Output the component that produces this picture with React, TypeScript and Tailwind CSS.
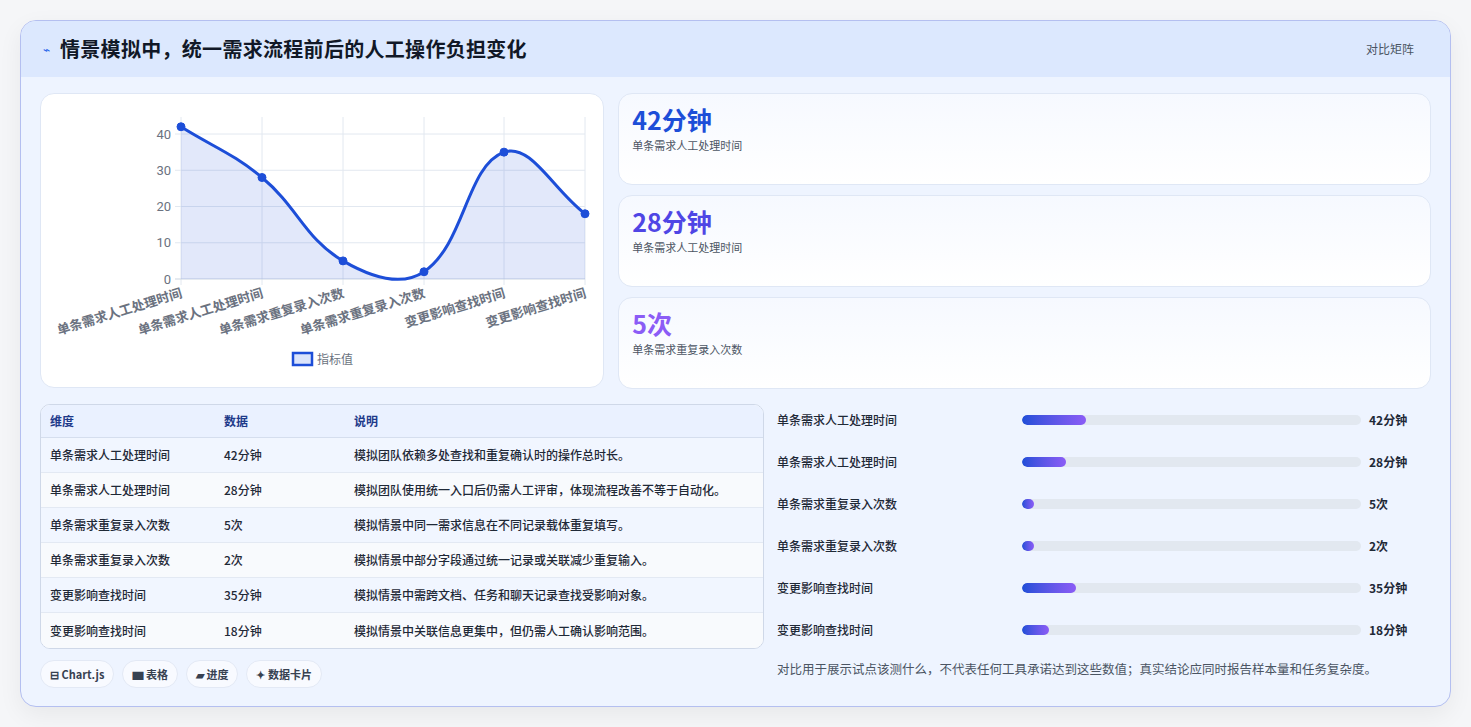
import React from "react";

const vals = [42, 28, 5, 2, 35, 18];
const labels = ["单条需求人工处理时间", "单条需求人工处理时间", "单条需求重复录入次数", "单条需求重复录入次数", "变更影响查找时间", "变更影响查找时间"];
const units = ["分钟", "分钟", "次", "次", "分钟", "分钟"];
const notes = [
  "模拟团队依赖多处查找和重复确认时的操作总时长。",
  "模拟团队使用统一入口后仍需人工评审，体现流程改善不等于自动化。",
  "模拟情景中同一需求信息在不同记录载体重复填写。",
  "模拟情景中部分字段通过统一记录或关联减少重复输入。",
  "模拟情景中需跨文档、任务和聊天记录查找受影响对象。",
  "模拟情景中关联信息更集中，但仍需人工确认影响范围。",
];
const pct = [19, 13, 3.5, 3.5, 16, 8];

const OX = 40, OY = 93;
const xs = [180, 261, 342, 423, 503, 584].map((x) => x - OX);
const y0 = 278 - OY;
const ys = vals.map((v) => y0 - v * 3.625);

function buildPath() {
  const t = 0.4;
  const pts = xs.map((x, i) => ({ x, y: ys[i] }));
  const cps = pts.map((p, i) => {
    const prev = pts[i - 1] || p, next = pts[i + 1] || p;
    const d01 = Math.hypot(p.x - prev.x, p.y - prev.y);
    const d12 = Math.hypot(next.x - p.x, next.y - p.y);
    let fa = d01 / (d01 + d12 || 1), fb = d12 / (d01 + d12 || 1);
    fa *= t; fb *= t;
    return {
      p: { x: p.x - fa * (next.x - prev.x), y: p.y - fa * (next.y - prev.y) },
      n: { x: p.x + fb * (next.x - prev.x), y: p.y + fb * (next.y - prev.y) },
    };
  });
  let d = `M${pts[0].x},${pts[0].y}`;
  for (let i = 1; i < pts.length; i++) {
    d += ` C${cps[i - 1].n.x},${cps[i - 1].n.y} ${cps[i].p.x},${cps[i].p.y} ${pts[i].x},${pts[i].y}`;
  }
  return d;
}

function Chart() {
  const d = buildPath();
  const area = `${d} L${xs[5]},${y0} L${xs[0]},${y0} Z`;
  return (
    <svg width="564" height="294" className="block">
      {xs.map((x, i) => (
        <line key={i} x1={x} x2={x} y1={116 - OY} y2={y0 + 6} stroke="#e2e8f0" />
      ))}
      {[0, 10, 20, 30, 40].map((v) => (
        <g key={v}>
          <line x1={xs[0] - 6} x2={xs[5]} y1={y0 - v * 3.625} y2={y0 - v * 3.625} stroke={v === 0 ? "#cbd5e1" : "#e2e8f0"} />
          <text x={xs[0] - 10} y={y0 - v * 3.625 + 4.5} textAnchor="end" fontSize="13" fill="#6b7280" fontFamily="Roboto, 'Noto Sans CJK SC', sans-serif">{v}</text>
        </g>
      ))}
      <path d={area} fill="rgba(29,78,216,0.13)" />
      <path d={d} fill="none" stroke="#1d4ed8" strokeWidth="3" />
      {xs.map((x, i) => (
        <circle key={i} cx={x} cy={ys[i]} r="4" fill="#1d4ed8" stroke="#1d4ed8" />
      ))}
      {xs.map((x, i) => (
        <text key={i} x={x + 2} y={y0 + 18} textAnchor="end" fontSize="13" fontWeight="600" fill="#6b7280" transform={`rotate(-17 ${x + 2} ${y0 + 18})`} fontFamily="'Noto Sans CJK SC', sans-serif">{labels[i]}</text>
      ))}
      <rect x={252} y={259} width={19} height={12} fill="#dbe4fb" stroke="#1d4ed8" strokeWidth="2.5" />
      <text x={276} y={269.5} fontSize="12" fill="#6b7280" fontFamily="'Noto Sans CJK SC', sans-serif">指标值</text>
    </svg>
  );
}

export default function App() {
  return (
    <div className="w-[1471px] h-[727px] bg-[#f5f6f8] p-[20px] pb-0" style={{ fontFamily: "'Noto Sans CJK SC', 'Noto Sans', sans-serif" }}>
      <div className="w-[1431px] h-[687px] rounded-[16px] border border-[#b4bff0] bg-[#eef4ff] overflow-hidden shadow-[0_8px_24px_rgba(0,0,0,0.06)]">
        <div className="h-[56px] bg-[#dce8fe] flex items-center justify-between pl-[22px] pr-[36px]">
          <div className="flex items-center gap-[10px]">
            <span className="text-[#2563eb] text-[12px]">⌁</span>
            <span className="text-[20px] font-bold text-[#111827] tracking-[0.3px]">情景模拟中，统一需求流程前后的人工操作负担变化</span>
          </div>
          <span className="text-[12px] text-[#4b5563]">对比矩阵</span>
        </div>
        <div className="px-[19px] pt-[16px]">
          <div className="flex gap-[14px]">
            <div className="w-[565px] h-[295px] bg-white rounded-[14px] border border-[#dfe7f5] overflow-hidden">
              <Chart />
            </div>
            <div className="w-[814px] flex flex-col gap-[10px]">
              {[
                ["42分钟", "单条需求人工处理时间", "text-[#1d4ed8]"],
                ["28分钟", "单条需求人工处理时间", "text-[#4f46e5]"],
                ["5次", "单条需求重复录入次数", "text-[#8b5cf6]"],
              ].map(([v, l, c], i) => (
                <div key={i} className="h-[92px] rounded-[14px] border border-[#dfe7f5] bg-gradient-to-b from-[#f6f9ff] to-white px-[13px] pt-[8px]">
                  <div className={`text-[25px] font-bold leading-[34px] ${c}`}>{v}</div>
                  <div className="text-[11px] text-[#4b5563] mt-[1px]">{l}</div>
                </div>
              ))}
            </div>
          </div>
          <div className="flex mt-[15px]">
            <div className="w-[724px]">
              <div className="rounded-[10px] border border-[#cfd8e8] overflow-hidden bg-white">
                <div className="flex h-[33px] items-center bg-[#eaf1ff] text-[12px] font-bold text-[#1e3a8a] border-b border-[#d5deee]">
                  <div className="w-[183px] pl-[9px]">维度</div>
                  <div className="w-[130px]">数据</div>
                  <div>说明</div>
                </div>
                {vals.map((v, i) => (
                  <div key={i} className={`flex h-[35px] items-center text-[12px] font-medium text-[#1f2937] ${i < 5 ? "border-b border-[#e3e9f3]" : ""} ${i % 2 === 0 ? "bg-[#f1f6ff]" : "bg-[#f8fafd]"}`}>
                    <div className="w-[183px] pl-[9px]">{labels[i]}</div>
                    <div className="w-[130px]">{v}{units[i]}</div>
                    <div>{notes[i]}</div>
                  </div>
                ))}
              </div>
              <div className="flex gap-[8px] mt-[11px]">
                {["⊟ Chart.js", "▆ 表格", "▰ 进度", "✦ 数据卡片"].map((t) => (
                  <span key={t} className="h-[28px] px-[9px] rounded-full bg-[#f8faff] border border-[#e3e9f5] text-[11px] font-bold text-[#374151] flex items-center">{t}</span>
                ))}
              </div>
            </div>
            <div className="w-[634px] ml-[13px] -mt-[5px]">
              {vals.map((v, i) => (
                <div key={i} className="flex items-center h-[42px] text-[12px] font-medium text-[#1f2937]">
                  <div className="w-[245px]">{labels[i]}</div>
                  <div className="w-[339px] h-[10px] rounded-full bg-[#e2e8f0] overflow-hidden">
                    <div className="h-full rounded-full bg-gradient-to-r from-[#1d4ed8] to-[#8b5cf6]" style={{ width: `${pct[i]}%` }} />
                  </div>
                  <div className="ml-[8px] font-bold">{v}{units[i]}</div>
                </div>
              ))}
              <div className="text-[12.5px] text-[#4b5563] mt-[9px]">对比用于展示试点该测什么，不代表任何工具承诺达到这些数值；真实结论应同时报告样本量和任务复杂度。</div>
            </div>
          </div>
        </div>
      </div>
    </div>
  );
}
